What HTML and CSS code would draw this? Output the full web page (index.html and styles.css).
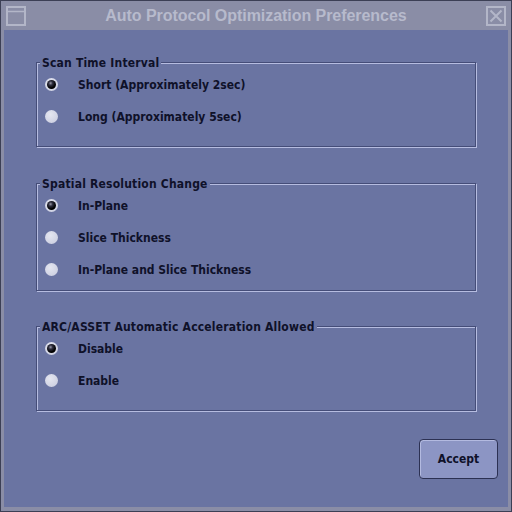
FILE: index.html
```html
<!DOCTYPE html>
<html>
<head>
<meta charset="utf-8">
<link rel="stylesheet" href="styles.css">
</head>
<body>
<div class="window">
  <div class="titlebar">
    <svg class="ticon" width="20" height="20" viewBox="0 0 20 20"><rect x="1" y="1" width="18" height="18" fill="none" stroke="#b3b6c8" stroke-width="2"/><line x1="1" y1="5.5" x2="19" y2="5.5" stroke="#b3b6c8" stroke-width="1.5"/></svg>
    <div class="title">Auto Protocol Optimization Preferences</div>
    <svg class="ticon" width="20" height="20" viewBox="0 0 20 20"><rect x="1" y="1" width="18" height="18" fill="none" stroke="#b3b6c8" stroke-width="2"/><path d="M4.5 4.5 L15.5 15.5 M15.5 4.5 L4.5 15.5" stroke="#b3b6c8" stroke-width="2"/></svg>
  </div>
  <div class="content">
    <div class="group g1">
      <span class="legend">Scan Time Interval</span>
      <div class="row"><span class="radio on"></span><span class="label">Short (Approximately 2sec)</span></div>
      <div class="row"><span class="radio"></span><span class="label">Long (Approximately 5sec)</span></div>
    </div>
    <div class="group g2">
      <span class="legend">Spatial Resolution Change</span>
      <div class="row"><span class="radio on"></span><span class="label">In-Plane</span></div>
      <div class="row"><span class="radio"></span><span class="label">Slice Thickness</span></div>
      <div class="row"><span class="radio"></span><span class="label">In-Plane and Slice Thickness</span></div>
    </div>
    <div class="group g3">
      <span class="legend">ARC/ASSET Automatic Acceleration Allowed</span>
      <div class="row"><span class="radio on"></span><span class="label">Disable</span></div>
      <div class="row"><span class="radio"></span><span class="label">Enable</span></div>
    </div>
    <div class="actions">
      <button class="btn">Accept</button>
    </div>
  </div>
</div>
</body>
</html>
```
FILE: styles.css
```css
html, body {
  margin: 0;
  padding: 0;
  background: #3a3d52;
}
.window {
  width: 512px;
  height: 512px;
  box-sizing: border-box;
  border: 1px solid #3c3f55;
  background: #8a8da6;
  padding: 0 3px 4px 3px;
  display: flex;
  flex-direction: column;
}
.titlebar {
  height: 29px;
  display: flex;
  align-items: center;
  padding: 0 2px;
  flex: none;
}
.ticon {
  flex: none;
  display: block;
}
.title {
  flex: 1;
  text-align: center;
  font-family: "Liberation Sans", Arial, sans-serif;
  font-weight: bold;
  font-size: 16px;
  color: #b7bacc;
  padding-top: 1px;
  letter-spacing: -0.05px;
}
.content {
  flex: 1;
  background: #6a74a2;
  padding: 32px 10px 0 32px;
  display: flex;
  flex-direction: column;
  font-family: "DejaVu Sans Condensed", "DejaVu Sans", sans-serif;
  font-weight: bold;
  font-size: 12px;
  color: #0f1129;
}
.group {
  position: relative;
  margin-right: 22px;
  box-sizing: border-box;
  border: 1px solid #454d78;
  box-shadow: inset 1px 1px 0 #b6bce0, 1px 1px 0 #b6bce0;
  padding: 5px 0 0 0;
}
.g1 { height: 85px; margin-bottom: 36px; }
.g2 { height: 108px; margin-bottom: 35px; }
.g3 { height: 85px; margin-bottom: 28px; }
.legend {
  position: absolute;
  left: 3px;
  top: -7px;
  padding: 0 2px;
  background: #6a74a2;
  line-height: 14px;
  letter-spacing: 0.2px;
}
.row {
  height: 32px;
  display: flex;
  align-items: center;
  padding-left: 8px;
}
.radio {
  width: 13px;
  height: 13px;
  border-radius: 50%;
  background: radial-gradient(circle at 40% 35%, #e4e6f0, #c7cade);
  flex: none;
  position: relative;
}
.radio.on::after {
  content: "";
  position: absolute;
  left: 2px;
  top: 2px;
  width: 9px;
  height: 9px;
  border-radius: 50%;
  background: radial-gradient(circle at 40% 35%, #9a9aa8 0, #303040 25%, #000 60%);
}
.label {
  margin-left: 20px;
  padding-top: 2px;
}
.actions {
  display: flex;
  justify-content: flex-end;
}
.btn {
  width: 79px;
  height: 40px;
  border: 1px solid #2c3153;
  border-radius: 4px;
  background: #8c95c4;
  box-shadow: inset 1px 1px 0 #b3bae0;
  font-family: "DejaVu Sans Condensed", "DejaVu Sans", sans-serif;
  font-weight: bold;
  font-size: 12px;
  color: #0f1129;
  padding: 0;
}
```
